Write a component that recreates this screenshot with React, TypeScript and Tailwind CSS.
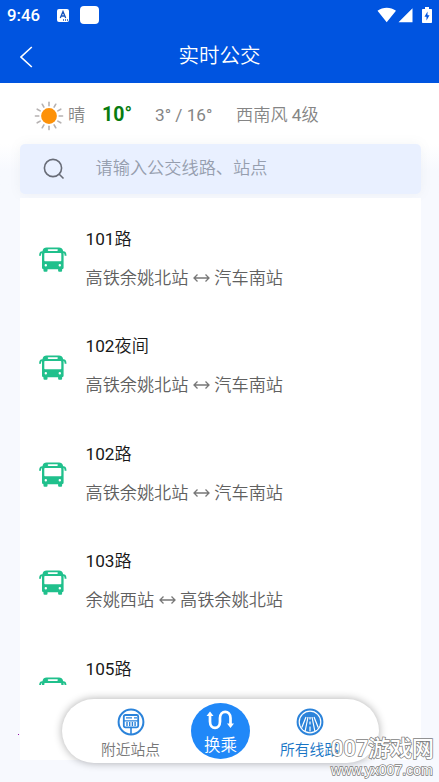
import React from "react";

const routes = [
  { num: "101", suffix: "路", from: "高铁余姚北站", to: "汽车南站" },
  { num: "102", suffix: "夜间", from: "高铁余姚北站", to: "汽车南站" },
  { num: "102", suffix: "路", from: "高铁余姚北站", to: "汽车南站" },
  { num: "103", suffix: "路", from: "余姚西站", to: "高铁余姚北站" },
  { num: "105", suffix: "路", from: "", to: "" },
];

function BusIcon() {
  return (
    <svg className="h-[25px] w-[28px] shrink-0" viewBox="0 0 28 25">
      <g fill="#20c08c">
        <path
          fillRule="evenodd"
          d="M7.500.5h12.500c2.200 0 3.400 1 3.800 2.600L24.600 6v14.500c0 1-.6 1.700-1.600 1.700H4.600c-1 0-1.600-.7-1.600-1.700V6l.8-2.900C4.200 1.500 5.300.5 7.500.5z M9.500 2.300a.8.8 0 0 0 0 1.600h8.600a.8.8 0 0 0 0-1.600z M6 6c-.4 0-.7.300-.7.700v6.900c0 .4.300.7.700.7h15.600c.4 0 .7-.3.700-.7V6.700c0-.4-.3-.7-.7-.7z M6.800 17a1.200 1.200 0 1 0 0 2.400 1.200 1.200 0 0 0 0-2.400z M20.800 17a1.200 1.200 0 1 0 0 2.400 1.200 1.200 0 0 0 0-2.400z"
        />
        <rect x="4.500" y="20" width="4" height="4.700" rx="1" />
        <rect x="19.100" y="20" width="4" height="4.700" rx="1" />
      </g>
      <path d="M3.800 5.200C2 4.900 1.200 5.700 1 8.800M23.800 5.200c1.800-.3 2.600.5 2.800 3.600" fill="none" stroke="#20c08c" strokeWidth="1.900" />
    </svg>
  );
}

function BothWays() {
  return (
    <svg className="mx-[4.500px] h-[10px] w-[17px] shrink-0" viewBox="0 0 17 10" fill="none" stroke="#777" strokeWidth="1.300">
      <path d="M1 5h15M4.500 1.500L1 5l3.500 3.500M12.500 1.500L16 5l-3.500 3.500" />
    </svg>
  );
}

function Sun() {
  return (
    <svg className="mt-[2px] h-[30px] w-[30px] shrink-0" viewBox="-15 -15 30 30">
      {[0, 30, 60, 90, 120, 150, 180, 210, 240, 270, 300, 330].map((a) => (
        <path key={a} d="M0-10.200V-13.600" stroke="#b5b1b1" strokeWidth="1.600" strokeLinecap="round" transform={`rotate(${a})`} />
      ))}
      <circle r="7.900" fill="#fd9108" />
    </svg>
  );
}

function StatusBar() {
  return (
    <div className="flex h-[30px] items-center pl-[7px] pr-[6px] text-white">
      <span className="w-[50px] font-[Roboto] text-[16.800px] font-medium leading-[30px]">9:46</span>
      <svg className="h-[13px] w-[12px]" viewBox="0 0 12 13">
        <rect width="12" height="13" rx="2" fill="white" />
        <path d="M3.300 9L6 2.500 8.700 9M4.300 7h3.400M6 11h1M8 11h1M10 11h1" fill="none" stroke="#1654bd" strokeWidth="1.300" />
      </svg>
      <span className="ml-[11px] h-[18px] w-[19px] rounded-[4px] bg-white" />
      <span className="flex-1" />
      <svg className="mt-[-1px] h-[16px] w-[57px]" viewBox="0 0 57 16" fill="white">
        <path d="M1.500 3.800C7-.2 14.500-.2 20 3.800L10.700 15.200z M22.500 15.200L36.500 1.200v14z" />
        <path
          fillRule="evenodd"
          d="M49 0h4v2h2c.6 0 1 .4 1 1v12c0 .6-.4 1-1 1h-8c-.6 0-1-.4-1-1V3c0-.6.400-1 1-1h2z M51.500 4.500L48.500 9.800h2v3.700l3-5.300h-2z"
        />
      </svg>
    </div>
  );
}

function NearbyIcon() {
  return (
    <svg className="h-[28px] w-[28px]" viewBox="0 0 28 28" fill="none" stroke="#2b83da">
      <circle cx="14" cy="14" r="12.400" strokeWidth="2" />
      <rect x="6.800" y="7" width="14.400" height="12.300" rx="1.500" strokeWidth="1.800" />
      <path d="M14 19v7" strokeWidth="1.600" />
      <path d="M7 12.900h14M9 9.900h6M17 9.900h3M10 14v4M12.700 14v4M15.400 14v4M18.100 14v4" strokeWidth="1.400" />
    </svg>
  );
}

function RoadIcon() {
  return (
    <svg className="h-[28px] w-[28px]" viewBox="0 0 28 28">
      <circle cx="14" cy="14" r="12.400" fill="white" stroke="#2b83da" strokeWidth="2" />
      <circle cx="14" cy="14" r="10.200" fill="#2b83da" />
      <path d="M10 9L5.800 19.500M18 9l4.200 10.500M12 9L9.200 23M16 9l2.800 14M14 9v2.500M14 13.500v3M14 18.500v5" stroke="white" strokeWidth="1.200" fill="none" />
    </svg>
  );
}

export default function App() {
  return (
    <div className="relative flex h-[782px] w-[439px] flex-col overflow-hidden bg-[#f7f9fe] font-[Roboto,'Noto_Sans_CJK_SC',sans-serif] font-[350]">
      <header className="h-[83px] shrink-0 bg-[#0054e0]">
        <StatusBar />
        <div className="flex h-[53px] items-center px-[20px] text-white">
          <svg className="h-[22px] w-[13px]" viewBox="0 0 13 22" fill="none" stroke="white" strokeWidth="1.600">
            <path d="M11.800 1L1 11l10.800 10" />
          </svg>
          <h1 className="mr-[13px] flex-1 pb-[1px] text-center text-[20.500px] font-[350] leading-[50px]">实时公交</h1>
        </div>
      </header>

      <div className="flex h-[61px] shrink-0 items-center bg-white pl-[34px] pt-[2px] text-[17.200px] leading-[24px] text-[#858585]">
        <Sun />
        <span className="ml-[4px] w-[34px]">晴</span>
        <span className="w-[53px] text-[19.500px] font-bold tracking-[0.100px] text-[#087c10]">10°</span>
        <span className="w-[81px] whitespace-nowrap font-normal">3° / 16°</span>
        <span className="whitespace-nowrap">
          西南风 <span className="font-normal">4</span>级
        </span>
      </div>

      <div className="h-[54px] shrink-0 bg-gradient-to-b from-white to-[#f7f9fe] to-50% pl-[20px] pr-[18px]">
        <div className="flex h-[50px] items-center rounded-[5px] bg-[#e9f0ff] pl-[23px] shadow-[0_0_12px_rgba(120,130,130,0.08)]">
          <svg className="h-[22px] w-[22px]" viewBox="0 0 22 22" fill="none" stroke="#686c77" strokeWidth="1.600">
            <circle cx="10" cy="10" r="8.600" />
            <path d="M16 16l4.500 4.500" />
          </svg>
          <span className="ml-[30.500px] pb-[2px] text-[17.200px] leading-[24px] text-[#969eae]">请输入公交线路、站点</span>
        </div>
      </div>

      <main className="ml-[20px] mr-[18px] h-[562px] shrink-0 bg-white">
        <ul className="h-[487px] overflow-hidden">
          {routes.map((r) => (
            <li key={r.num + r.suffix} className="flex h-[107.500px] pl-[18.500px]">
              <div className="pt-[49px]">
                <BusIcon />
              </div>
              <div className="ml-[19px] flex flex-col pt-[27.500px]">
                <div className="h-[39px] text-[17.200px] leading-[26px] text-[#181818]">
                  <span className="font-normal">{r.num}</span>
                  {r.suffix}
                </div>
                {r.from && (
                  <div className="flex items-center whitespace-nowrap text-[17.150px] leading-[26px] text-[#606060]">
                    {r.from}
                    <BothWays />
                    {r.to}
                  </div>
                )}
              </div>
            </li>
          ))}
        </ul>
      </main>

      <span className="absolute left-[18px] top-[734px] h-px w-px bg-[#9510a8]" />

      <nav className="absolute left-[62px] top-[699px] flex h-[64px] w-[317px] rounded-full bg-white text-[14.800px] leading-[20px] shadow-[0_0_9px_rgba(0,0,0,0.32)]">
        <div className="ml-[31.500px] flex w-[74px] flex-col items-center pt-[8.500px] text-[#777]">
          <NearbyIcon />
          <span className="mt-[4px] whitespace-nowrap">附近站点</span>
        </div>
        <div className="ml-[23.500px] mt-[4px] flex h-[56px] w-[59px] flex-col items-center rounded-[50%] bg-[#2088f8] pt-[6px] text-white">
          <svg className="h-[22px] w-[29px]" viewBox="0 0 29 22" fill="none" stroke="white" strokeWidth="2.700">
            <path d="M4 5.500v7c0 8.500 10 8.500 10 0V9c0-8.200 10.500-8.200 10.500 0v6.500" />
            <path d="M.5 7L4 2.500 7.500 7zM21 14.500l3.500 4.500 3.500-4.500z" fill="white" stroke="none" />
          </svg>
          <span className="mt-[2px] whitespace-nowrap text-[16.500px] leading-[26px]">换乘</span>
        </div>
        <div className="ml-[22.500px] flex w-[74px] flex-col items-center pt-[8.500px] text-[#1774c5]">
          <RoadIcon />
          <span className="mt-[4px] whitespace-nowrap">所有线路</span>
        </div>
      </nav>

      <div className="absolute left-[331px] top-[735px] whitespace-nowrap text-white [-webkit-text-stroke:1.500px_#808080] [paint-order:stroke_fill]">
        <div className="text-[21.900px] font-medium leading-[28px]">007游戏网</div>
        <div className="mt-[1px] font-['Liberation_Sans'] text-[14.100px] leading-[12px]">www.yx007.com</div>
      </div>
    </div>
  );
}
